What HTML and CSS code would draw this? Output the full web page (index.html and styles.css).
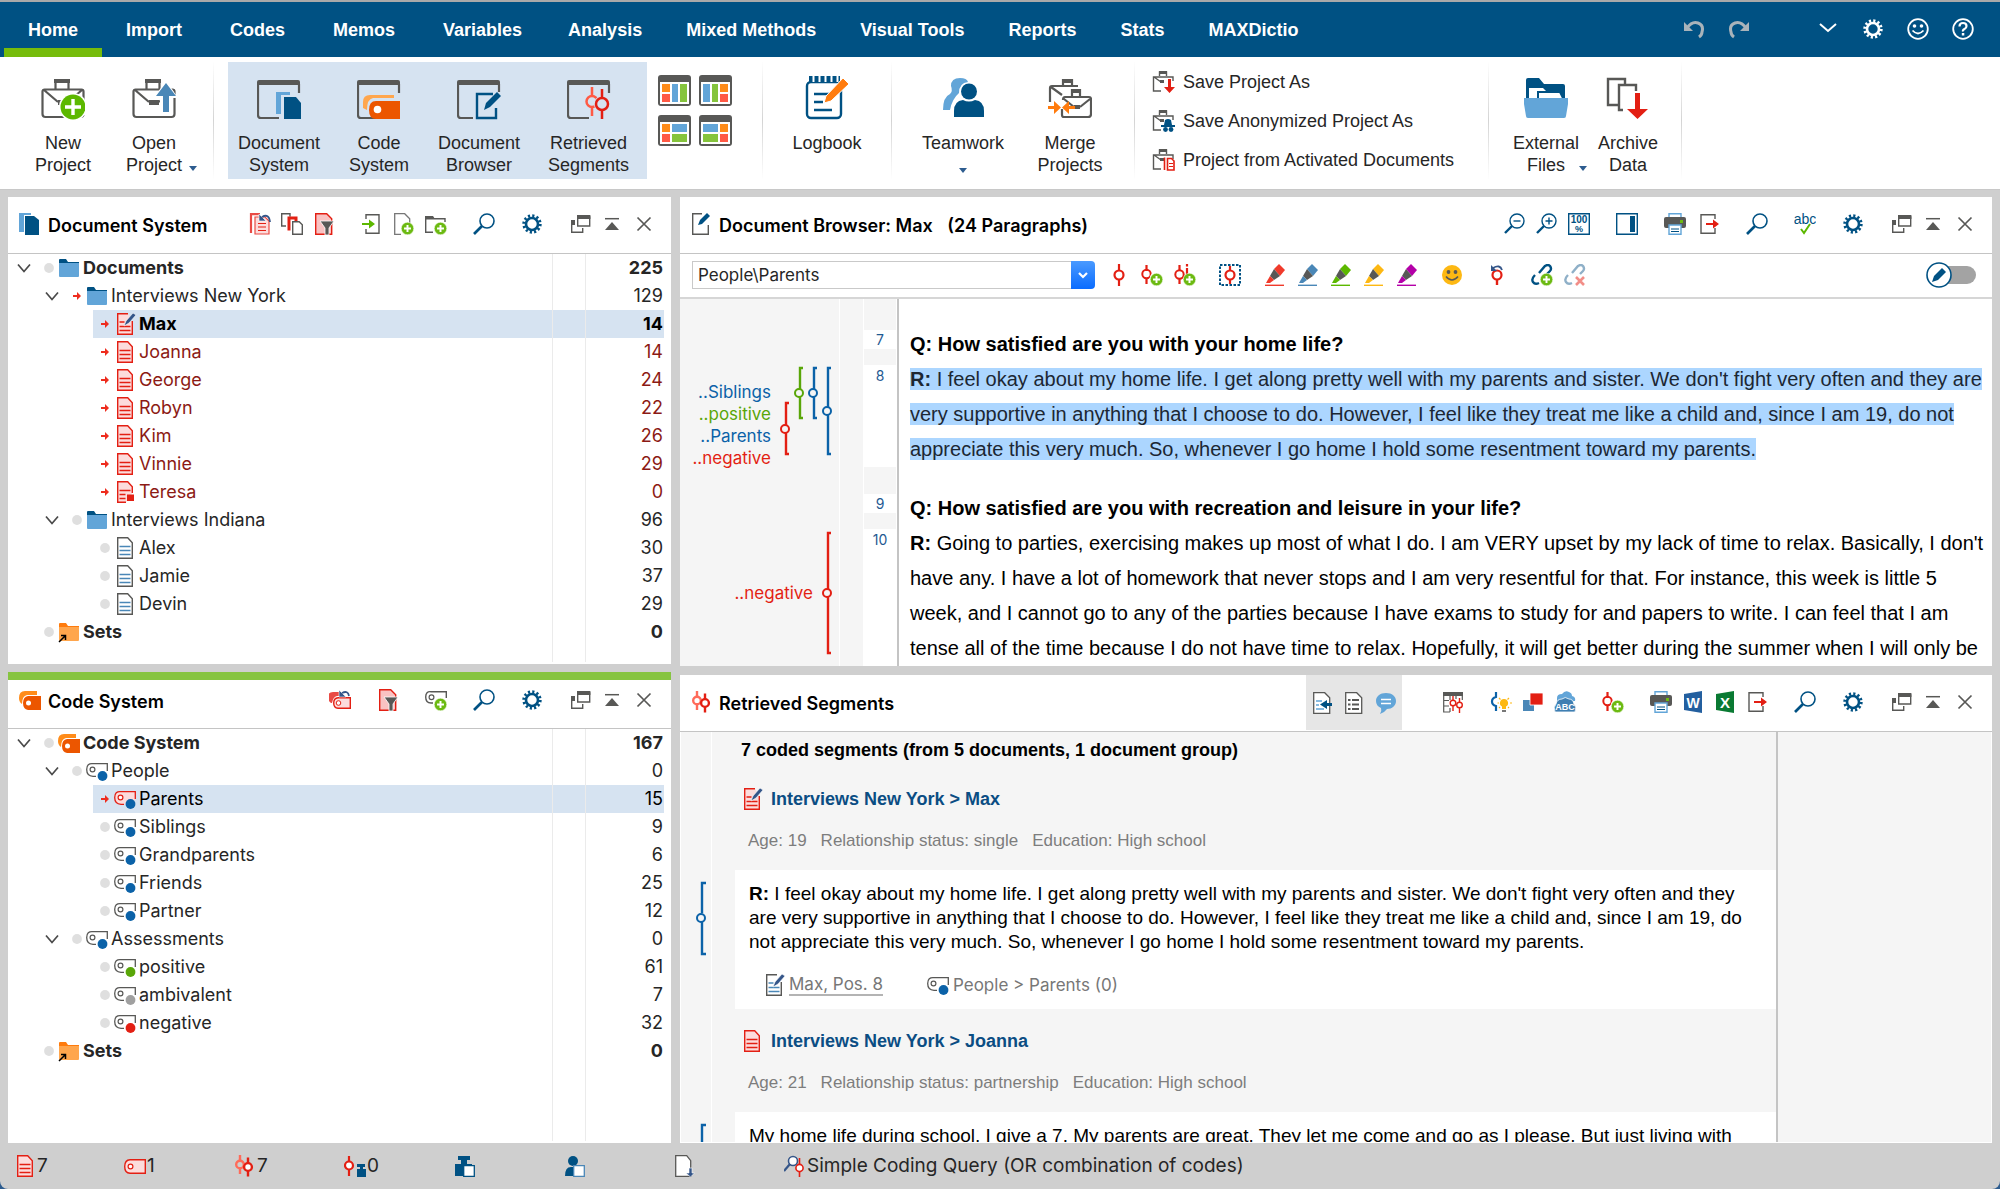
FILE: index.html
```html
<!DOCTYPE html>
<html lang="en">
<head>
<meta charset="utf-8">
<title>Project workspace</title>
<link rel="stylesheet" href="styles.css">
</head>
<body>
<svg class="sprite" aria-hidden="true">
  <!-- shared parts -->
  <symbol id="plus" viewBox="0 0 12 12"><circle cx="6" cy="6" r="5.800" fill="#6cba12" stroke="#fff" stroke-width=".5"/><path d="M6 2.800v6.400M2.800 6h6.400" stroke="#fff" stroke-width="1.800"/></symbol>
  <symbol id="case" viewBox="0 0 44 44"><path d="M13 3h16v4H13z" fill="#585856"/><path d="M14.500 13V4h13v9M3.500 13.500h37a2 2 0 0 1 2 2V38a3 3 0 0 1-3 3h-35a3 3 0 0 1-3-3V15.500a2 2 0 0 1 2-2zM3 14l14 12M41 14 27 26" fill="none" stroke="#585856" stroke-width="2.200"/><path d="M17 24h10v5H17z" fill="#585856"/></symbol>
  <symbol id="window" viewBox="0 0 44 44"><path d="M0 6a2 2 0 0 1 2-2h39a2 2 0 0 1 2 2v3H0z" fill="#585856"/><path d="M1 8v31q0 3 3 3h18M42 8v9" fill="none" stroke="#585856" stroke-width="2.200"/></symbol>

  <!-- ribbon -->
  <symbol id="r-new" viewBox="0 0 44 44"><use href="#case" width="44" height="44"/><circle cx="32" cy="31" r="14" fill="#fff"/><circle cx="32" cy="31" r="12.500" fill="#5cb800"/><path d="M32 23v16M24 31h16" stroke="#fff" stroke-width="3.400"/></symbol>
  <symbol id="r-open" viewBox="0 0 44 44"><use href="#case" width="44" height="44"/><path d="M34 4 46 22h-6v16H28V22h-6z" fill="#fff"/><path d="M34 7 44 20h-7v16h-6V20h-7z" fill="#4a87b7"/></symbol>
  <symbol id="r-docs" viewBox="0 0 44 44"><use href="#window" width="44" height="44"/><path d="M19 16h14v22H19z" fill="#62a5d8"/><path d="M24 19h21v26H24z" fill="#d6e3f1"/><path d="M27 21h12l5 6v16H27z" fill="#005183"/></symbol>
  <symbol id="r-codes" viewBox="0 0 44 44"><use href="#window" width="44" height="44"/><path d="M6 32V26q0-7 7-7h24v3H16q-6 1-6 12z" fill="#ffa64d"/><path d="M19 25h24v18H19q-7 0-7-9t7-9z" fill="#ec5600"/><circle cx="20.500" cy="33.500" r="3.800" fill="#fff"/></symbol>
  <symbol id="r-browser" viewBox="0 0 44 44"><use href="#window" width="44" height="44"/><path d="M16 16h29v28H16z" fill="#d6e3f1"/><path d="M36 18H20v24h19V32" fill="none" stroke="#005183" stroke-width="2.400"/><path d="m27 34 2-7L40 16l4 4-11 11z" fill="#005183"/></symbol>
  <symbol id="r-segments" viewBox="0 0 44 44"><use href="#window" width="44" height="44"/><g fill="none" stroke="#ff5a45" stroke-width="2.500"><path d="M25 11v9M25 31v9"/><circle cx="25" cy="25.500" r="5.500"/></g><circle cx="35" cy="28" r="8" fill="#d6e3f1"/><g fill="none" stroke="#e31f13" stroke-width="2.500"><path d="M35 13v9M35 34v9"/><circle cx="35" cy="28" r="6"/></g></symbol>
  <symbol id="lay1" viewBox="0 0 33 31"><rect width="33" height="31" rx="3" fill="#585856"/><path d="M2 7h29v22H2z" fill="#fff"/><path d="M4 9h8v8H4z" fill="#ff8c1a"/><path d="M4 19h8v8H4z" fill="#ff5a45"/><path d="M14 9h6v18h-6z" fill="#62a5d8"/><path d="M22 9h7v18h-7z" fill="#85c43c"/></symbol>
  <symbol id="lay2" viewBox="0 0 33 31"><rect width="33" height="31" rx="3" fill="#585856"/><path d="M2 7h29v22H2z" fill="#fff"/><path d="M21 9h8v8h-8z" fill="#ff8c1a"/><path d="M21 19h8v8h-8z" fill="#ff5a45"/><path d="M4 9h7v18H4z" fill="#62a5d8"/><path d="M13 9h6v18h-6z" fill="#85c43c"/></symbol>
  <symbol id="lay3" viewBox="0 0 33 31"><rect width="33" height="31" rx="3" fill="#585856"/><path d="M2 7h29v22H2z" fill="#fff"/><path d="M4 9h8v8H4z" fill="#ff8c1a"/><path d="M4 19h8v8H4z" fill="#ff5a45"/><path d="M14 9h15v8H14z" fill="#62a5d8"/><path d="M14 19h15v8H14z" fill="#85c43c"/></symbol>
  <symbol id="lay4" viewBox="0 0 33 31"><rect width="33" height="31" rx="3" fill="#585856"/><path d="M2 7h29v22H2z" fill="#fff"/><path d="M21 9h8v8h-8z" fill="#ff8c1a"/><path d="M21 19h8v8h-8z" fill="#ff5a45"/><path d="M4 9h15v8H4z" fill="#62a5d8"/><path d="M4 19h15v8H4z" fill="#85c43c"/></symbol>
  <symbol id="r-log" viewBox="0 0 44 44"><rect x="2" y="6" width="34" height="36" rx="4" fill="#fff" stroke="#005183" stroke-width="2.400"/><path d="M4-1h31v8H4z" fill="#005183"/><path d="M8.500-2v8M14.500-2v8M20.500-2v8M26.500-2v8M32.500-2v8" stroke="#fff" stroke-width="2"/><path d="M9 18h16M9 26h9M9 34h18" stroke="#005183" stroke-width="2.400"/><path d="m19 27 2-7L38 2l6 6-18 17z" fill="#ff7b0d" stroke="#fff" stroke-width="1"/></symbol>
  <symbol id="r-team" viewBox="0 0 44 44"><path d="M10 10q0-8 9-8 7 0 8 4-9 1-9 11-7 6-9 17H2q0-13 7-16 3-3 1-8z" fill="#62a5d8"/><circle cx="28" cy="15.500" r="8" fill="#005183"/><path d="M13 41V35q0-10 9-11 6 3 12 0 9 1 9 11v6z" fill="#005183"/></symbol>
  <symbol id="r-merge" viewBox="0 0 44 44"><g fill="none" stroke="#585856" stroke-width="2.200"><path d="M15 10V4h9v6M2 26V12q0-2 2-2h26M3 11l11 8M24 21v-7h8v7M14 33v6q0 2 2 2h24q3 0 3-3V23q0-2-2-2H17q-2 0-2 3M16 23l10 8M42 23 32 31"/></g><path d="M14 3h11v4H14zM23 13h10v4H23zM26 29h6v4h-6z" fill="#585856"/><path d="M-1 30h7v-5l7 6.500L6 38v-5h-7zM27 30h-6v-5l-7 6.500 7 6.500v-5h6z" fill="#ff7b0d"/></symbol>
  <symbol id="r-ext" viewBox="0 0 44 44"><path d="M2 30V4q0-2 2-2h11l5 6h19q2 0 2 2v20z" fill="#005183"/><path d="M5 12h14l5 5v6H5z" fill="#fff"/><path d="M14 16h22l4 8H14z" fill="#fff" stroke="#005183" stroke-width="2"/><path d="M-1 22h46l-3 18q0 2-2 2H4q-2 0-2-2z" fill="#62a5d8"/></symbol>
  <symbol id="r-arch" viewBox="0 0 44 44"><path d="M13 29H2V3h17v6M17 34h-4V9h17v6" fill="none" stroke="#585856" stroke-width="2.400"/><path d="M29 17h5v16h8L31.500 43 21 33h8z" fill="#e31f13"/></symbol>
  <symbol id="s-case" viewBox="0 0 23 23"><path d="M7 1h8v3H7z" fill="#585856"/><path d="M7.500 6V2h7v4M21 11V7H1.500v14H9M2 7l7 5" fill="none" stroke="#585856" stroke-width="1.400"/><path d="M8 10h4v3H8z" fill="#585856"/></symbol>
  <symbol id="s-save" viewBox="0 0 23 23"><use href="#s-case" width="23" height="23"/><path d="M16 9h3v8h4l-5.500 6L12 17h4z" fill="#e31f13"/></symbol>
  <symbol id="s-anon" viewBox="0 0 23 23"><use href="#s-case" width="23" height="23"/><path d="M13 11q3-2 6 0l1 5h3v2H9v-2h3z" fill="#005183"/><circle cx="13.500" cy="20.500" r="2.400" fill="#005183"/><circle cx="19" cy="20.500" r="2.400" fill="#005183"/></symbol>
  <symbol id="s-act" viewBox="0 0 23 23"><use href="#s-case" width="23" height="23"/><path d="M12.500 22V9.500M15.500 10.500h4l2.500 2.500v9h-6.500z" fill="#fff" stroke="#e31f13" stroke-width="1.600"/><path d="M17 15.500h4M17 18.500h4" stroke="#e31f13" stroke-width="1.200"/></symbol>

  <!-- title bar -->
  <symbol id="undo" viewBox="0 0 22 22"><path d="M1 4v9h9z" fill="#a9b3ba"/><path d="M4 10Q9 3 15 5t4 9q0 3-3 5" fill="none" stroke="#a9b3ba" stroke-width="3"/></symbol>
  <symbol id="redo" viewBox="0 0 22 22"><path d="M21 4v9h-9z" fill="#a9b3ba"/><path d="M18 10Q13 3 7 5t-4 9q0 3 3 5" fill="none" stroke="#a9b3ba" stroke-width="3"/></symbol>
  <symbol id="down" viewBox="0 0 22 22"><path d="m3 6 8 7 8-7" fill="none" stroke="currentColor" stroke-width="2"/></symbol>
  <symbol id="smile" viewBox="0 0 22 22"><circle cx="11" cy="11" r="9.800" fill="none" stroke="#fff" stroke-width="1.800"/><circle cx="7.500" cy="8" r="1.800" fill="#fff"/><circle cx="14.500" cy="8" r="1.800" fill="#fff"/><path d="M5.500 12.500q5.500 6 11 0" fill="none" stroke="#fff" stroke-width="1.800"/></symbol>
  <symbol id="help" viewBox="0 0 22 22"><circle cx="11" cy="11" r="9.800" fill="none" stroke="#fff" stroke-width="1.800"/><path d="M7.500 8.500q0-3.500 3.500-3.500t3.500 3q0 2-2 3T11 13.500" fill="none" stroke="#fff" stroke-width="2.200"/><path d="M9.800 15h2.500v2.500H9.800z" fill="#fff"/></symbol>

  <!-- panel toolbars -->
  <symbol id="gear" viewBox="0 0 22 22"><circle cx="11" cy="11" r="8.200" fill="none" stroke="currentColor" stroke-width="3" stroke-dasharray="2.147"/><circle cx="11" cy="11" r="6" fill="none" stroke="currentColor" stroke-width="2.600"/></symbol>
  <symbol id="search" viewBox="0 0 22 22"><circle cx="14" cy="8" r="7" fill="none" stroke="#005183" stroke-width="1.600"/><path d="m9 13-8 8" stroke="#005183" stroke-width="2.600"/></symbol>
  <symbol id="zoomout" viewBox="0 0 22 22"><circle cx="13" cy="8" r="7" fill="none" stroke="#005183" stroke-width="1.400"/><path d="m8 13-7 7" stroke="#005183" stroke-width="2.400"/><path d="M9.500 8h7" stroke="#005183" stroke-width="1.400"/></symbol>
  <symbol id="zoomin" viewBox="0 0 22 22"><circle cx="13" cy="8" r="7" fill="none" stroke="#005183" stroke-width="1.400"/><path d="m8 13-7 7" stroke="#005183" stroke-width="2.400"/><path d="M9.500 8h7M13 4.500v7" stroke="#005183" stroke-width="1.400"/></symbol>
  <symbol id="hundred" viewBox="0 0 22 22"><path d="M.7.700h20.600v20.600H.7z" fill="none" stroke="#005183" stroke-width="1.400"/><text x="11" y="10" font-size="10" font-weight="bold" text-anchor="middle" fill="#005183">100</text><text x="11" y="19" font-size="9" font-weight="bold" text-anchor="middle" fill="#005183">%</text></symbol>
  <symbol id="sidebar" viewBox="0 0 22 22"><path d="M.7.700h20.600v20.600H.7z" fill="none" stroke="#005183" stroke-width="1.400"/><path d="M14 3h5v16h-5z" fill="#005183"/></symbol>
  <symbol id="printer" viewBox="0 0 22 22"><path d="M5 6V.7h12V6" fill="none" stroke="#62a5d8" stroke-width="1.400"/><rect y="4" width="22" height="11" rx="2" fill="#585856"/><path d="M16 7h3v3h-3z" fill="#6cba12"/><path d="M5 12h12v9.300H5z" fill="#fff" stroke="#62a5d8" stroke-width="1.400"/><path d="M7 16h8M7 18.500h8" stroke="#005183" stroke-width="1.200"/></symbol>
  <symbol id="export" viewBox="0 0 22 22"><path d="M17 6V1.700H3v18.600h14V15" fill="none" stroke="#585856" stroke-width="1.400"/><path d="M8 10h7V6.500l6 4.500-6 4.500V12H8z" fill="#e31f13"/></symbol>
  <symbol id="restore" viewBox="0 0 22 22"><path d="M8.700 4h12v9h-12z" fill="none" stroke="#585856" stroke-width="1.400"/><path d="M8 2h13.400v4H8zM2 7h4v5H2z" fill="#585856"/><path d="M2.700 9v10.300h11V15" fill="none" stroke="#585856" stroke-width="1.400"/></symbol>
  <symbol id="collapse" viewBox="0 0 22 22"><path d="M4 5.700h14" stroke="#585856" stroke-width="1.500"/><path d="m11 9 7 8H4z" fill="#585856"/></symbol>
  <symbol id="close" viewBox="0 0 22 22"><path d="m4.500 4.500 13 13M17.500 4.500l-13 13" stroke="#585856" stroke-width="1.700"/></symbol>
  <symbol id="abc" viewBox="0 0 22 22"><text x="11" y="11" font-size="14" text-anchor="middle" fill="#005183">abc</text><path d="m7 16 3 4 6-9" fill="none" stroke="#5cb800" stroke-width="2"/></symbol>
  <symbol id="reset-docs" viewBox="0 0 22 22"><path d="M2 20V1.200h9" fill="none" stroke="#e94b45" stroke-width="2.200"/><path d="M6 4h10l4 4v13H6z" fill="#fcdcdc" stroke="#e94b45" stroke-width="1.200"/><path d="M9 10.500h8M9 14h8M9 17.500h8" stroke="#e31f13" stroke-width="1.200"/><path d="M10 1v7h7z" fill="#355689" stroke="#fff" stroke-width=".6"/><path d="M13 4q7-4 8 5" fill="none" stroke="#355689" stroke-width="1.800"/></symbol>
  <symbol id="copy-docs" viewBox="0 0 22 22"><path d="M5 13H.7V.7H9v3" fill="none" stroke="#585856" stroke-width="1.400"/><path d="M8 17.500V5h7v3" fill="none" stroke="#e31f13" stroke-width="3"/><path d="M11.700 8.700h6.500l3.100 3v9.600h-9.600z" fill="#fff" stroke="#585856" stroke-width="1.400"/></symbol>
  <symbol id="filter-doc" viewBox="0 0 22 22"><path d="M2.700.7h11l5 5v15.600h-16z" fill="#f9c2c2" stroke="#e31f13" stroke-width="1.400"/><path d="M7 8h14l-5 7v7h-4v-7z" fill="#585856" stroke="#fff" stroke-width=".8"/></symbol>
  <symbol id="import" viewBox="0 0 22 22"><path d="M5 6V1.700h13v18.600H5V16" fill="none" stroke="#585856" stroke-width="1.400"/><path d="M1 10h7V6.500l6 4.500-6 4.500V12H1z" fill="#5cb800"/></symbol>
  <symbol id="doc-plus" viewBox="0 0 22 22"><path d="M8 21.300H1.700V.7h10l5 5V10" fill="none" stroke="#777" stroke-width="1.300"/><use href="#plus" x="8" y="9" width="13" height="13"/></symbol>
  <symbol id="folder-plus" viewBox="0 0 22 22"><path d="M8 19.300H.7V5.700H20V9" fill="none" stroke="#585856" stroke-width="1.400"/><path d="M0 3h8l2 3H0z" fill="#585856"/><use href="#plus" x="9" y="9" width="13" height="13"/></symbol>
  <symbol id="reset-codes" viewBox="0 0 22 22"><path d="M2 14Q-1 12-1 8q0-5 5-5h7v4H8q-4 1-5 7z" fill="#e94b45"/><path d="M9 8.700h12.300v10.600H9Q4.700 19 4.700 14T9 8.700z" fill="#fcdcdc" stroke="#e31f13" stroke-width="1.400"/><circle cx="9.500" cy="14" r="2.300" fill="#fff" stroke="#e31f13"/><path d="M10 1v7h7z" fill="#355689" stroke="#fff" stroke-width=".6"/><path d="M13 4q6-3 7 3" fill="none" stroke="#355689" stroke-width="1.800"/></symbol>
  <symbol id="code-plus" viewBox="0 0 22 22"><path d="M8 14H6Q.7 14 .7 8T6 2.700h15.300V9" fill="none" stroke="#585856" stroke-width="1.400"/><circle cx="6.500" cy="8.300" r="2.400" fill="none" stroke="#585856" stroke-width="1.200"/><use href="#plus" x="9" y="9" width="13" height="13"/></symbol>

  <!-- coding toolbar -->
  <symbol id="seg" viewBox="0 0 22 22"><path d="M11 0v6M11 15v7" stroke="currentColor" stroke-width="2.200"/><circle cx="11" cy="11" r="4.500" fill="none" stroke="currentColor" stroke-width="2.200"/></symbol>
  <symbol id="seg-plus" viewBox="0 0 22 22"><path d="M5.500 1v6M5.500 14v6" stroke="#e31f13" stroke-width="2.200"/><circle cx="5.500" cy="10" r="4.200" fill="none" stroke="#e31f13" stroke-width="2"/><circle cx="16" cy="15" r="7.500" fill="#fff"/><use href="#plus" x="9" y="9" width="13" height="13"/></symbol>
  <symbol id="seg-info" viewBox="0 0 22 22"><path d="M5.500 1v6M5.500 14v6M13 4v7M13 0v2.500" stroke="#e31f13" stroke-width="2.200"/><circle cx="5.500" cy="10.500" r="4.200" fill="none" stroke="#e31f13" stroke-width="2"/><use href="#plus" x="9" y="9" width="13" height="13"/></symbol>
  <symbol id="seg-box" viewBox="0 0 22 22"><path d="M1 1h20v20H1z" fill="none" stroke="#005183" stroke-width="2" stroke-dasharray="2.500 1.500"/><path d="M11 2v5M11 15v5" stroke="#e31f13" stroke-width="2.200"/><circle cx="11" cy="11" r="4.500" fill="none" stroke="#e31f13" stroke-width="2.200"/></symbol>
  <symbol id="marker" viewBox="0 0 22 22"><path d="M1 21.300h19" stroke="currentColor" stroke-width="1.400"/><path d="m15 0 6 6-5 6-6-7z" fill="currentColor"/><path d="m10 5 6 7-6 4-4-4z" fill="#585856"/><path d="m6 12 4 4-4 3H2z" fill="currentColor"/></symbol>
  <symbol id="emoji" viewBox="0 0 22 22"><circle cx="11" cy="11" r="10" fill="#fdb813"/><circle cx="7.500" cy="8" r="1.900" fill="#585856"/><circle cx="14.500" cy="8" r="1.900" fill="#585856"/><path d="M5 12.500q6 7 12 0" fill="none" stroke="#585856" stroke-width="1.600"/></symbol>
  <symbol id="seg-undo" viewBox="0 0 22 22"><circle cx="11" cy="11" r="4.500" fill="none" stroke="#e31f13" stroke-width="2.200"/><path d="M11 15v6" stroke="#e31f13" stroke-width="2.400"/><path d="M5 1v6h6z" fill="#355689"/><path d="M7 4q7-4 9 2" fill="none" stroke="#355689" stroke-width="1.800"/></symbol>
  <symbol id="link-plus" viewBox="0 0 22 22"><g fill="none" stroke="currentColor" stroke-width="2.400"><path d="m8 9 6-7q3-2 5 0 2 3 0 5l-3 3"/><path d="M4 11q-4 4-2 7 2 3 6 1"/></g><use href="#plus" x="9" y="9" width="13" height="13"/></symbol>
  <symbol id="link-x" viewBox="0 0 22 22"><g fill="none" stroke="#8fb0c8" stroke-width="2.400"><path d="m8 9 6-7q3-2 5 0 2 3 0 5l-3 3"/><path d="M4 11q-4 4-2 7 2 3 6 1"/></g><path d="m12 13 8 8M20 13l-8 8" stroke="#f28e88" stroke-width="2.600"/></symbol>
  <symbol id="toggle" viewBox="0 0 50 26"><rect x="14" y="4" width="36" height="18" rx="9" fill="#a3a3a3"/><circle cx="13" cy="13" r="12" fill="#fff" stroke="#005183" stroke-width="1.600"/><path d="m6 20 2-6 8-8 4 4-8 8z" fill="#005183"/></symbol>

  <!-- retrieved toolbar -->
  <symbol id="doc-in" viewBox="0 0 22 22"><path d="M2.700.7h11l5 5v15.600h-16z" fill="#fff" stroke="#585856" stroke-width="1.300"/><path d="M5 9h6M5 13h3M5 17h8" stroke="#62a5d8" stroke-width="1.300"/><path d="M21 11h-5V8l-7 4.500 7 4.500v-3h5z" fill="#005183"/></symbol>
  <symbol id="doc-list" viewBox="0 0 22 22"><path d="M2.700.7h11l5 5v15.600h-16z" fill="#fff" stroke="#585856" stroke-width="1.300"/><path d="M5 8h2.500M5 12.500h2.500M5 17h2.500M9 8h7M9 12.500h7M9 17h7" stroke="#585856" stroke-width="1.900"/></symbol>
  <symbol id="comment" viewBox="0 0 22 22"><path d="M11 1c6 0 10 3.500 10 8s-4 8-9 8q-3 4-7 5 2-3 1-6-5-2-5-7c0-4.500 4-8 10-8z" fill="#62a5d8"/><path d="M6 7.500h10M6 11.500h10" stroke="#fff" stroke-width="1.500"/></symbol>
  <symbol id="table-seg" viewBox="0 0 22 22"><path d="M1 1h20v4H1z" fill="#585856"/><path d="M1.700 4v17H8M8 5v4M2 9.500h5M2 15h5M20.300 5v4M14 5v3M8 17v4" fill="none" stroke="#585856" stroke-width="1.200"/><g fill="none" stroke="#e31f13" stroke-width="1.400"><circle cx="11" cy="12" r="2.800"/><circle cx="17.500" cy="14" r="2.800"/><path d="M11 5v4M11 15v5M17.500 7v4M17.500 17v5"/></g></symbol>
  <symbol id="seg-bulb" viewBox="0 0 22 22"><path d="M6 1v5Q2 7 2 10.500T6 15v5" fill="none" stroke="#0b62a8" stroke-width="2.200"/><path d="M14 8a4 4 0 0 1 2 7.500V18h-4v-2.500A4 4 0 0 1 14 8z" fill="#fdb813"/><path d="M12 19h4v2h-4z" fill="#777"/><path d="m9 7 1.500 1.500M19 7l-1.500 1.500M7.500 12H9M20 12h2M9 17l1-1M19 17l-1-1" stroke="#fdb813" stroke-width="1.200"/></symbol>
  <symbol id="squares" viewBox="0 0 22 22"><path d="M1 9h11v11H1z" fill="#4a87b7"/><path d="M8 2h13v12H8z" fill="#e31f13" stroke="#fff" stroke-width=".8"/></symbol>
  <symbol id="wordcloud" viewBox="0 0 22 22"><path d="M3 7q0-4 5-4 3-4 7-2 3 1 3 4 4 1 3 5H3z" fill="#62a5d8"/><path d="M1 21q-2-5 1-8 1-5 6-5 3-3 7 0 4 0 5 5 3 3 1 8z" fill="#3f7fb2" stroke="#fff" stroke-width=".8"/><text x="11" y="19" font-size="9" font-weight="bold" text-anchor="middle" fill="#fff">ABC</text></symbol>
  <symbol id="word" viewBox="0 0 22 22"><path d="M2 3 20 0v22L2 19z" fill="#235f9f"/><text x="11" y="16.500" font-size="14" font-weight="bold" text-anchor="middle" fill="#fff">W</text></symbol>
  <symbol id="excel" viewBox="0 0 22 22"><path d="M2 3 20 0v22L2 19z" fill="#0a7a33"/><text x="11" y="16.500" font-size="15" font-weight="bold" text-anchor="middle" fill="#fff">X</text></symbol>

  <!-- panel titles and tree items -->
  <symbol id="t-docs" viewBox="0 0 22 22"><path d="M0 0h12v2H5v17H0z" fill="#62a5d8"/><path d="M6 3h9l5 4v15H6z" fill="#005183"/></symbol>
  <symbol id="t-codes" viewBox="0 0 22 22"><path d="M3 15Q0 13 0 9q0-7 6-7h12v4H8q-5 1-5 9z" fill="#ff8c1a"/><path d="M9 7h13v14H9q-5-1-5-7t5-7z" fill="#ec5600"/><circle cx="9.500" cy="14" r="2.500" fill="#fff"/></symbol>
  <symbol id="t-browser" viewBox="0 0 22 22"><path d="M11 .7H1.700v20.600h15.600V12" fill="none" stroke="#585856" stroke-width="1.400"/><path d="m7 12 2-5 7-7 3 3-8 8z" fill="#005183"/></symbol>
  <symbol id="t-segs" viewBox="0 0 22 22"><g fill="none" stroke="#ff6b5a" stroke-width="2.400"><path d="M6 0v6M6 13v6"/><circle cx="6" cy="9.500" r="3.800"/></g><g fill="#fff" stroke="#e31f13" stroke-width="2.400"><path d="M14 2.500v6M14 15.500v6"/><circle cx="14" cy="12" r="3.900"/></g></symbol>
  <symbol id="folder" viewBox="0 0 22 22"><path d="M1 8V3q0-1 1-1h6l2 3h11v3z" fill="var(--tab)"/><path d="M1 6h20v13q0 1-1 1H2q-1 0-1-1z" fill="var(--face)"/></symbol>
  <symbol id="set" viewBox="0 0 22 22"><path d="M1 8V3q0-1 1-1h6l2 3h11v3z" fill="#ff7b0d"/><path d="M1 6h20v13q0 1-1 1H2q-1 0-1-1z" fill="#ffa64d"/><path d="m1 21 6-6M3 14.500h4.500V19" fill="none" stroke="#000" stroke-width="1.500"/></symbol>
  <symbol id="file" viewBox="0 0 22 22"><path d="M3.700.7h10l4.600 5v15.600H3.700z" fill="var(--page)" stroke="var(--edge)" stroke-width="1.400"/><path d="M5.500 9.500h11M5.500 13.500h11M5.500 17.500h11" stroke="var(--rule)" stroke-width="1.400"/></symbol>
  <symbol id="file-pen" viewBox="0 0 22 22"><path d="M14 .7H3.700v20.600h14.600V8" fill="var(--page)" stroke="var(--edge)" stroke-width="1.400"/><path d="M5.500 9h5M5.500 13.500h11M5.500 17.500h11" stroke="var(--rule)" stroke-width="1.400"/><path d="m10 13 2-5 7-8 3 2-7 8z" fill="#355689" stroke="#fff" stroke-width=".6"/></symbol>
  <symbol id="file-sq" viewBox="0 0 22 22"><path d="M12 21.300H3.700V.7h10l4.600 5V12" fill="var(--page)" stroke="var(--edge)" stroke-width="1.400"/><path d="M5.500 9.500h11M5.500 13.500h6M5.500 17.500h6" stroke="var(--rule)" stroke-width="1.400"/><path d="M13 13.500h7V20h-7z" fill="#e31f13"/></symbol>
  <symbol id="code" viewBox="0 0 22 22"><path d="M10 16.300H7Q.7 16 .7 9.500T7 3.700h14.300V12z" fill="var(--page)"/><path d="M10 16.300H7Q.7 16 .7 9.500T7 3.700h14.300V11" fill="none" stroke="var(--edge)" stroke-width="1.300"/><circle cx="6.500" cy="9.500" r="2.400" fill="#fff" stroke="var(--edge)" stroke-width="1.200"/><circle cx="16.500" cy="16" r="4.900" fill="currentColor"/></symbol>
  <symbol id="tag" viewBox="0 0 22 22"><path d="M6 4.700h15.300v13.600H6Q.7 18 .7 11.500T6 4.700z" fill="#fcdcdc" stroke="#e31f13" stroke-width="1.400"/><circle cx="6.500" cy="11.500" r="2.400" fill="#fff" stroke="#e31f13" stroke-width="1.200"/></symbol>
  <symbol id="go" viewBox="0 0 10 10"><path d="M1 4h4V1l4 4-4 4V6H1z" fill="#ee2c1e"/></symbol>
  <symbol id="dot" viewBox="0 0 10 10"><circle cx="5" cy="5" r="4.900" fill="#dfdfdf"/></symbol>
  <symbol id="chev" viewBox="0 0 14 14"><path d="m1 3.500 6 7 6-7" fill="none" stroke="#4a4a4a" stroke-width="1.700"/></symbol>

  <!-- status bar -->
  <symbol id="st-weight" viewBox="0 0 22 22"><path d="M5 1v20" stroke="#e31f13" stroke-width="2.200"/><circle cx="5" cy="10.500" r="4" fill="#fff" stroke="#e31f13" stroke-width="2.200"/><path d="M13 9h8v3h-2v2h3v8h-9v-8h3v-2h-3z" fill="#005183"/></symbol>
  <symbol id="st-bottle" viewBox="0 0 22 22"><path d="M4 1h12v4h-3v4h5v12H1V9h6V5H4z" fill="#005183"/><path d="M9.700 10.700h10.600v10.600H9.700z" fill="#fff" stroke="#005183" stroke-width="1.300"/></symbol>
  <symbol id="st-user" viewBox="0 0 22 22"><circle cx="9" cy="6" r="5" fill="#005183"/><path d="M1 21q0-9 6-9h8v9z" fill="#005183"/><path d="M9.700 10.700h10.600v10.600H9.700z" fill="#fff" stroke="#4a87b7" stroke-width="1.300"/></symbol>
  <symbol id="st-doc" viewBox="0 0 22 22"><path d="M1.700.7h11l4 5v15.600h-15z" fill="#fff" stroke="#585856" stroke-width="1.300"/><path d="M15 13h3v5h2.500L16.500 22 12 18h3z" fill="#355689" stroke="#fff" stroke-width=".6"/></symbol>
  <symbol id="st-query" viewBox="0 0 22 22"><circle cx="9" cy="6" r="4.500" fill="#fff" stroke="#355689" stroke-width="1.600"/><path d="m6 9-6 7" stroke="#355689" stroke-width="2.200"/><path d="M15.500 3v19" stroke="#e31f13" stroke-width="1.600"/><circle cx="15.500" cy="13" r="3.600" fill="#fff" stroke="#e31f13" stroke-width="1.600"/></symbol>
</svg>

<header class="topbar">
  <nav class="tabs" aria-label="Main">
    <a href="#" class="tab active" aria-current="page">Home</a><a href="#" class="tab">Import</a><a href="#" class="tab">Codes</a><a href="#" class="tab">Memos</a><a href="#" class="tab">Variables</a><a href="#" class="tab">Analysis</a><a href="#" class="tab">Mixed Methods</a><a href="#" class="tab">Visual Tools</a><a href="#" class="tab">Reports</a><a href="#" class="tab">Stats</a><a href="#" class="tab">MAXDictio</a>
  </nav>
  <div class="quick">
    <div class="set wide"><button aria-label="Undo"><svg class="ic"><use href="#undo"/></svg></button><button aria-label="Redo"><svg class="ic"><use href="#redo"/></svg></button></div>
    <div class="set wide"><button aria-label="Hide ribbon"><svg class="ic"><use href="#down"/></svg></button><button aria-label="Settings"><svg class="ic"><use href="#gear"/></svg></button><button aria-label="Feedback"><svg class="ic"><use href="#smile"/></svg></button><button aria-label="Help"><svg class="ic"><use href="#help"/></svg></button></div>
  </div>
</header>

<section class="ribbon" aria-label="Home tools">
  <div class="group first">
    <button class="tool w92"><svg class="big"><use href="#r-new"/></svg><span>New<br>Project</span></button>
    <button class="tool w90"><svg class="big"><use href="#r-open"/></svg><span>Open<br>Project</span><i class="caret side"></i></button>
  </div>
  <div class="group on">
    <button class="tool w102"><svg class="big"><use href="#r-docs"/></svg><span>Document<br>System</span></button>
    <button class="tool w98"><svg class="big"><use href="#r-codes"/></svg><span>Code<br>System</span></button>
    <button class="tool w102"><svg class="big"><use href="#r-browser"/></svg><span>Document<br>Browser</span></button>
    <button class="tool w117"><svg class="big"><use href="#r-segments"/></svg><span>Retrieved<br>Segments</span></button>
  </div>
  <div class="layouts">
    <button aria-label="Layout 1"><svg class="lay"><use href="#lay1"/></svg></button>
    <button aria-label="Layout 2"><svg class="lay"><use href="#lay2"/></svg></button>
    <button aria-label="Layout 3"><svg class="lay"><use href="#lay3"/></svg></button>
    <button aria-label="Layout 4"><svg class="lay"><use href="#lay4"/></svg></button>
  </div>
  <div class="group split">
    <button class="tool w100"><svg class="big"><use href="#r-log"/></svg><span>Logbook</span></button>
  </div>
  <div class="group split">
    <button class="tool w114"><svg class="big"><use href="#r-team"/></svg><span>Teamwork</span><i class="caret under"></i></button>
    <button class="tool w100"><svg class="big"><use href="#r-merge"/></svg><span>Merge<br>Projects</span></button>
  </div>
  <div class="group split list">
    <button class="line"><svg class="sm"><use href="#s-save"/></svg>Save Project As</button>
    <button class="line"><svg class="sm"><use href="#s-anon"/></svg>Save Anonymized Project As</button>
    <button class="line"><svg class="sm"><use href="#s-act"/></svg>Project from Activated Documents</button>
  </div>
  <div class="group split last">
    <button class="tool w86"><svg class="big"><use href="#r-ext"/></svg><span>External<br>Files</span><i class="caret side"></i></button>
    <button class="tool w78"><svg class="big"><use href="#r-arch"/></svg><span>Archive<br>Data</span></button>
  </div>
</section>

<main class="workspace">
  <div class="side">
    <section class="panel docs" aria-label="Document System">
      <header class="bar">
        <svg class="ic"><use href="#t-docs"/></svg><h2>Document System</h2>
        <div class="tools">
          <div class="set"><button aria-label="Reset activations"><svg class="ic"><use href="#reset-docs"/></svg></button><button aria-label="Activated documents"><svg class="ic"><use href="#copy-docs"/></svg></button><button aria-label="Filter"><svg class="ic"><use href="#filter-doc"/></svg></button></div>
          <div class="set"><button aria-label="Import"><svg class="ic"><use href="#import"/></svg></button><button aria-label="New document"><svg class="ic"><use href="#doc-plus"/></svg></button><button aria-label="New group"><svg class="ic"><use href="#folder-plus"/></svg></button></div>
          <button aria-label="Search"><svg class="ic"><use href="#search"/></svg></button>
          <button aria-label="Settings"><svg class="ic blue"><use href="#gear"/></svg></button>
          <div class="set"><button aria-label="Undock"><svg class="ic"><use href="#restore"/></svg></button><button aria-label="Minimize"><svg class="ic"><use href="#collapse"/></svg></button><button aria-label="Close"><svg class="ic"><use href="#close"/></svg></button></div>
        </div>
      </header>
      <div class="treebox">
        <table class="tree">
          <tbody>
          <tr class="l0 strong"><th scope="row"><div><svg class="chev"><use href="#chev"/></svg><svg class="mk"><use href="#dot"/></svg><svg class="ic fblue"><use href="#folder"/></svg>Documents</div></th><td></td><td>225</td></tr>
          <tr class="l1"><th scope="row"><div><svg class="chev"><use href="#chev"/></svg><svg class="mk"><use href="#go"/></svg><svg class="ic fblue"><use href="#folder"/></svg>Interviews New York</div></th><td></td><td>129</td></tr>
          <tr class="l2 strong sel"><th scope="row"><div><svg class="mk"><use href="#go"/></svg><svg class="ic red"><use href="#file-pen"/></svg>Max</div></th><td></td><td>14</td></tr>
          <tr class="l2 act"><th scope="row"><div><svg class="mk"><use href="#go"/></svg><svg class="ic red"><use href="#file"/></svg>Joanna</div></th><td></td><td>14</td></tr>
          <tr class="l2 act"><th scope="row"><div><svg class="mk"><use href="#go"/></svg><svg class="ic red"><use href="#file"/></svg>George</div></th><td></td><td>24</td></tr>
          <tr class="l2 act"><th scope="row"><div><svg class="mk"><use href="#go"/></svg><svg class="ic red"><use href="#file"/></svg>Robyn</div></th><td></td><td>22</td></tr>
          <tr class="l2 act"><th scope="row"><div><svg class="mk"><use href="#go"/></svg><svg class="ic red"><use href="#file"/></svg>Kim</div></th><td></td><td>26</td></tr>
          <tr class="l2 act"><th scope="row"><div><svg class="mk"><use href="#go"/></svg><svg class="ic red"><use href="#file"/></svg>Vinnie</div></th><td></td><td>29</td></tr>
          <tr class="l2 act"><th scope="row"><div><svg class="mk"><use href="#go"/></svg><svg class="ic red"><use href="#file-sq"/></svg>Teresa</div></th><td></td><td>0</td></tr>
          <tr class="l1"><th scope="row"><div><svg class="chev"><use href="#chev"/></svg><svg class="mk"><use href="#dot"/></svg><svg class="ic fblue"><use href="#folder"/></svg>Interviews Indiana</div></th><td></td><td>96</td></tr>
          <tr class="l2"><th scope="row"><div><svg class="mk"><use href="#dot"/></svg><svg class="ic"><use href="#file"/></svg>Alex</div></th><td></td><td>30</td></tr>
          <tr class="l2"><th scope="row"><div><svg class="mk"><use href="#dot"/></svg><svg class="ic"><use href="#file"/></svg>Jamie</div></th><td></td><td>37</td></tr>
          <tr class="l2"><th scope="row"><div><svg class="mk"><use href="#dot"/></svg><svg class="ic"><use href="#file"/></svg>Devin</div></th><td></td><td>29</td></tr>
          <tr class="l0 strong leaf"><th scope="row"><div><svg class="mk"><use href="#dot"/></svg><svg class="ic"><use href="#set"/></svg>Sets</div></th><td></td><td>0</td></tr>
          </tbody>
        </table>
      </div>
    </section>

    <section class="panel codes" aria-label="Code System">
      <header class="bar">
        <svg class="ic"><use href="#t-codes"/></svg><h2>Code System</h2>
        <div class="tools">
          <button aria-label="Reset activations"><svg class="ic"><use href="#reset-codes"/></svg></button>
          <button aria-label="Filter"><svg class="ic"><use href="#filter-doc"/></svg></button>
          <button aria-label="New code"><svg class="ic"><use href="#code-plus"/></svg></button>
          <button aria-label="Search"><svg class="ic"><use href="#search"/></svg></button>
          <button aria-label="Settings"><svg class="ic blue"><use href="#gear"/></svg></button>
          <div class="set"><button aria-label="Undock"><svg class="ic"><use href="#restore"/></svg></button><button aria-label="Minimize"><svg class="ic"><use href="#collapse"/></svg></button><button aria-label="Close"><svg class="ic"><use href="#close"/></svg></button></div>
        </div>
      </header>
      <div class="treebox">
        <table class="tree">
          <tbody>
          <tr class="l0 strong"><th scope="row"><div><svg class="chev"><use href="#chev"/></svg><svg class="mk"><use href="#dot"/></svg><svg class="ic"><use href="#t-codes"/></svg>Code System</div></th><td></td><td>167</td></tr>
          <tr class="l1"><th scope="row"><div><svg class="chev"><use href="#chev"/></svg><svg class="mk"><use href="#dot"/></svg><svg class="ic cblue"><use href="#code"/></svg>People</div></th><td></td><td>0</td></tr>
          <tr class="l2 sel"><th scope="row"><div><svg class="mk"><use href="#go"/></svg><svg class="ic red cblue"><use href="#code"/></svg>Parents</div></th><td></td><td>15</td></tr>
          <tr class="l2"><th scope="row"><div><svg class="mk"><use href="#dot"/></svg><svg class="ic cblue"><use href="#code"/></svg>Siblings</div></th><td></td><td>9</td></tr>
          <tr class="l2"><th scope="row"><div><svg class="mk"><use href="#dot"/></svg><svg class="ic cblue"><use href="#code"/></svg>Grandparents</div></th><td></td><td>6</td></tr>
          <tr class="l2"><th scope="row"><div><svg class="mk"><use href="#dot"/></svg><svg class="ic cblue"><use href="#code"/></svg>Friends</div></th><td></td><td>25</td></tr>
          <tr class="l2"><th scope="row"><div><svg class="mk"><use href="#dot"/></svg><svg class="ic cblue"><use href="#code"/></svg>Partner</div></th><td></td><td>12</td></tr>
          <tr class="l1"><th scope="row"><div><svg class="chev"><use href="#chev"/></svg><svg class="mk"><use href="#dot"/></svg><svg class="ic cblue"><use href="#code"/></svg>Assessments</div></th><td></td><td>0</td></tr>
          <tr class="l2"><th scope="row"><div><svg class="mk"><use href="#dot"/></svg><svg class="ic cgreen"><use href="#code"/></svg>positive</div></th><td></td><td>61</td></tr>
          <tr class="l2"><th scope="row"><div><svg class="mk"><use href="#dot"/></svg><svg class="ic cgray"><use href="#code"/></svg>ambivalent</div></th><td></td><td>7</td></tr>
          <tr class="l2"><th scope="row"><div><svg class="mk"><use href="#dot"/></svg><svg class="ic cred"><use href="#code"/></svg>negative</div></th><td></td><td>32</td></tr>
          <tr class="l0 strong leaf"><th scope="row"><div><svg class="mk"><use href="#dot"/></svg><svg class="ic"><use href="#set"/></svg>Sets</div></th><td></td><td>0</td></tr>
          </tbody>
        </table>
      </div>
    </section>
  </div>

  <div class="content">
    <section class="panel browser" aria-label="Document Browser">
      <header class="bar">
        <svg class="ic"><use href="#t-browser"/></svg><h2>Document Browser: Max <span class="count">(24 Paragraphs)</span></h2>
        <div class="tools">
          <div class="set"><button aria-label="Zoom out"><svg class="ic"><use href="#zoomout"/></svg></button><button aria-label="Zoom in"><svg class="ic"><use href="#zoomin"/></svg></button><button aria-label="Original size"><svg class="ic"><use href="#hundred"/></svg></button></div>
          <button aria-label="Sidebar"><svg class="ic"><use href="#sidebar"/></svg></button>
          <div class="set loose"><button aria-label="Print"><svg class="ic"><use href="#printer"/></svg></button><button aria-label="Export"><svg class="ic"><use href="#export"/></svg></button></div>
          <button aria-label="Search"><svg class="ic"><use href="#search"/></svg></button>
          <button aria-label="Spell check"><svg class="ic"><use href="#abc"/></svg></button>
          <button aria-label="Settings"><svg class="ic blue"><use href="#gear"/></svg></button>
          <div class="set"><button aria-label="Undock"><svg class="ic"><use href="#restore"/></svg></button><button aria-label="Minimize"><svg class="ic"><use href="#collapse"/></svg></button><button aria-label="Close"><svg class="ic"><use href="#close"/></svg></button></div>
        </div>
      </header>
      <div class="coding">
        <div class="combo"><select aria-label="Code"><option>People\Parents</option></select><svg class="arrow" viewBox="0 0 24 28"><path d="m8 12 4 4 4-4" fill="none" stroke="#fff" stroke-width="2.200"/></svg></div>
        <div class="tools">
          <div class="set"><button aria-label="Code"><svg class="ic cred"><use href="#seg"/></svg></button><button aria-label="Code with new code"><svg class="ic"><use href="#seg-plus"/></svg></button><button aria-label="Code in vivo"><svg class="ic"><use href="#seg-info"/></svg></button></div>
          <button aria-label="Open coding mode"><svg class="ic"><use href="#seg-box"/></svg></button>
          <div class="set"><button aria-label="Red marker"><svg class="ic m-red"><use href="#marker"/></svg></button><button aria-label="Blue marker"><svg class="ic m-blue"><use href="#marker"/></svg></button><button aria-label="Green marker"><svg class="ic m-green"><use href="#marker"/></svg></button><button aria-label="Yellow marker"><svg class="ic m-yellow"><use href="#marker"/></svg></button><button aria-label="Magenta marker"><svg class="ic m-magenta"><use href="#marker"/></svg></button></div>
          <button aria-label="Emoticode"><svg class="ic"><use href="#emoji"/></svg></button>
          <button aria-label="Undo coding"><svg class="ic"><use href="#seg-undo"/></svg></button>
          <div class="set"><button aria-label="Insert link"><svg class="ic blue"><use href="#link-plus"/></svg></button><button aria-label="Remove link"><svg class="ic"><use href="#link-x"/></svg></button></div>
        </div>
        <button class="edit" aria-label="Edit mode"><svg class="switch"><use href="#toggle"/></svg></button>
      </div>
      <div class="doc">
        <div class="gutter">
          <div class="codings">
            <ul><li class="cblue">..Siblings</li><li class="cgreen">..positive</li><li class="cblue">..Parents</li><li class="cred">..negative</li></ul>
            <svg width="60" height="90" viewBox="0 0 60 90" fill="none" stroke-width="2"><g class="cgreen" stroke="currentColor"><path d="M24 2h-3v22M21 31v21h3" stroke-width="2.400"/><circle cx="20" cy="27" r="4"/></g><g class="cblue" stroke="currentColor"><path d="M38 2h-3v22M35 31v21h3" stroke-width="2.400"/><circle cx="34" cy="27" r="4"/><path d="M52 2h-3v40M49 49v39h3" stroke-width="2.400"/><circle cx="48" cy="45" r="4"/></g><g class="cred" stroke="currentColor"><path d="M10 37H7v22M7 67v21h3" stroke-width="2.400"/><circle cx="6" cy="63" r="4"/></g></svg>
          </div>
          <div class="codings single">
            <ul><li class="cred">..negative</li></ul>
            <svg class="cred" width="22" height="124" viewBox="0 0 22 124" fill="none" stroke="currentColor" stroke-width="2"><path d="M14 2h-3v56M11 66v56h3" stroke-width="2.400"/><circle cx="10" cy="62" r="4"/></svg>
          </div>
        </div>
        <div class="spacer"></div>
        <ol class="paras">
          <li class="q"><span class="num">7</span><p><b>Q: How satisfied are you with your home life?</b></p></li>
          <li class="r"><span class="num">8</span><p><mark><b>R:</b> I feel okay about my home life. I get along pretty well with my parents and sister. We don't fight very often and they are very supportive in anything that I choose to do. However, I feel like they treat me like a child and, since I am 19, do not appreciate this very much. So, whenever I go home I hold some resentment toward my parents.</mark></p></li>
          <li class="q"><span class="num">9</span><p><b>Q: How satisfied are you with recreation and leisure in your life?</b></p></li>
          <li class="r"><span class="num">10</span><p><b>R:</b> Going to parties, exercising makes up most of what I do. I am VERY upset by my lack of time to relax. Basically, I don't have any. I have a lot of homework that never stops and I am very resentful for that. For instance, this week is little 5 week, and I cannot go to any of the parties because I have exams to study for and papers to write. I can feel that I am tense all of the time because I do not have time to relax. Hopefully, it will get better during the summer when I will only be</p></li>
        </ol>
      </div>
    </section>

    <section class="panel retrieved" aria-label="Retrieved Segments">
      <header class="bar">
        <svg class="ic"><use href="#t-segs"/></svg><h2>Retrieved Segments</h2>
        <div class="tools">
          <div class="set views"><button aria-label="With sources"><svg class="ic"><use href="#doc-in"/></svg></button><button aria-label="List"><svg class="ic"><use href="#doc-list"/></svg></button><button aria-label="Comments"><svg class="ic"><use href="#comment"/></svg></button></div>
          <button aria-label="Overview"><svg class="ic"><use href="#table-seg"/></svg></button>
          <div class="set"><button aria-label="Smart coding"><svg class="ic"><use href="#seg-bulb"/></svg></button><button aria-label="Matrix"><svg class="ic"><use href="#squares"/></svg></button><button aria-label="Word cloud"><svg class="ic"><use href="#wordcloud"/></svg></button></div>
          <button aria-label="Autocode"><svg class="ic"><use href="#seg-plus"/></svg></button>
          <div class="set"><button aria-label="Print"><svg class="ic"><use href="#printer"/></svg></button><button aria-label="Word export"><svg class="ic"><use href="#word"/></svg></button><button aria-label="Excel export"><svg class="ic"><use href="#excel"/></svg></button><button aria-label="Export"><svg class="ic"><use href="#export"/></svg></button></div>
          <button aria-label="Search"><svg class="ic"><use href="#search"/></svg></button>
          <button aria-label="Settings"><svg class="ic blue"><use href="#gear"/></svg></button>
          <div class="set"><button aria-label="Undock"><svg class="ic"><use href="#restore"/></svg></button><button aria-label="Minimize"><svg class="ic"><use href="#collapse"/></svg></button><button aria-label="Close"><svg class="ic"><use href="#close"/></svg></button></div>
        </div>
      </header>
      <div class="results">
        <div class="list-area">
          <h3>7 coded segments (from 5 documents, 1 document group)</h3>
          <article>
            <h4><svg class="ic red"><use href="#file-pen"/></svg>Interviews New York &gt; Max</h4>
            <p class="meta"><span>Age: 19</span><span>Relationship status: single</span><span>Education: High school</span></p>
            <div class="hit">
              <svg class="bracket cblue" width="12" height="76" viewBox="0 0 12 76" fill="none" stroke="currentColor" stroke-width="2"><path d="M11 2H7v30M7 41v32h4" stroke-width="2.400"/><circle cx="6" cy="37" r="4"/></svg>
              <div class="card">
                <p><b>R:</b> I feel okay about my home life. I get along pretty well with my parents and sister. We don't fight very often and they are very supportive in anything that I choose to do. However, I feel like they treat me like a child and, since I am 19, do not appreciate this very much. So, whenever I go home I hold some resentment toward my parents.</p>
                <p class="origin"><svg class="ic"><use href="#file-pen"/></svg><a href="#">Max, Pos. 8</a><svg class="ic cblue second"><use href="#code"/></svg><span>People &gt; Parents (0)</span></p>
              </div>
            </div>
          </article>
          <article>
            <h4><svg class="ic red"><use href="#file"/></svg>Interviews New York &gt; Joanna</h4>
            <p class="meta"><span>Age: 21</span><span>Relationship status: partnership</span><span>Education: High school</span></p>
            <div class="hit">
              <svg class="bracket cblue" width="12" height="76" viewBox="0 0 12 76" fill="none" stroke="currentColor" stroke-width="2"><path d="M11 2H7v30M7 41v32h4" stroke-width="2.400"/><circle cx="6" cy="37" r="4"/></svg>
              <div class="card"><p>My home life during school, I give a 7. My parents are great. They let me come and go as I please. But just living with</p></div>
            </div>
          </article>
        </div>
        <div class="rest"></div>
      </div>
    </section>
  </div>
</main>

<footer class="status">
  <span class="stat"><svg class="ic red"><use href="#file"/></svg>7</span>
  <span class="stat"><svg class="ic"><use href="#tag"/></svg>1</span>
  <span class="stat"><svg class="ic"><use href="#t-segs"/></svg>7</span>
  <span class="stat"><svg class="ic"><use href="#st-weight"/></svg>0</span>
  <span class="stat"><svg class="ic"><use href="#st-bottle"/></svg></span>
  <span class="stat"><svg class="ic"><use href="#st-user"/></svg></span>
  <span class="stat"><svg class="ic"><use href="#st-doc"/></svg></span>
  <span class="stat"><svg class="ic"><use href="#st-query"/></svg>Simple Coding Query (OR combination of codes)</span>
</footer>
</body>
</html>
```
FILE: styles.css
```css
:root {
  --navy: #005183;
  --pale: #d6e3f1;
  --frame: #cfcfcf;
  --ink: #262626;
  --ui: Inter, "Noto Sans", sans-serif;
  --text: "Liberation Sans", Arial, sans-serif;
  /* default icon colours, overridden by .red */
  --page: #fff;
  --edge: #585856;
  --rule: #4a87b7;
}

* { box-sizing: border-box; }

body {
  margin: 0;
  height: 100vh;
  display: flex;
  flex-direction: column;
  overflow: hidden;
  background: #2d5c8f;
  color: var(--ink);
  font-family: var(--text);
  font-size: 18px;
  line-height: 22px;
}

h2, h3, h4, p, ul, ol { margin: 0; padding: 0; list-style: none; }

button {
  border: 0;
  padding: 0;
  background: none;
  color: inherit;
  font: inherit;
}

svg { display: block; flex: none; }
svg text { font-family: var(--text); }
.sprite { position: absolute; width: 0; height: 0; }
.ic { width: 22px; height: 22px; overflow: visible; }

.blue { color: var(--navy); }
.cblue { color: #0b62a8; }
.cgreen { color: #59a608; }
.cgray { color: #a0a0a0; }
.cred { color: #e31f13; }
.m-red { color: #f03a2b; }
.m-blue { color: #4a87b7; }
.m-green { color: #5cb800; }
.m-yellow { color: #fdb813; }
.m-magenta { color: #b400a8; }
.red { --page: #fcdcdc; --edge: #e31f13; --rule: #e31f13; }
.fblue { --tab: #005183; --face: #62a5d8; }

/* top navigation */
.topbar {
  flex: none;
  height: 57px;
  display: flex;
  justify-content: space-between;
  padding: 0 26px 0 4px;
  background: var(--navy);
  border-top: 2px solid #a9a9a9;
  color: #fff;
}
.tabs { display: flex; }
.tab {
  padding: 17px 24px 0;
  color: #fff;
  font-weight: bold;
  text-decoration: none;
  white-space: nowrap;
}
.tab:nth-child(n+6) { padding: 17px 22px 0; }
.tab.active { border-bottom: 9px solid #76bc0b; }
.quick { display: flex; gap: 67px; align-items: center; padding-bottom: 2px; }

.set { display: flex; align-items: center; gap: 10px; }
.set.loose { gap: 12px; }
.set.wide { gap: 23px; }

/* ribbon */
.ribbon {
  flex: none;
  height: 133px;
  display: flex;
  padding: 5px 17px 10px;
  background: #fff;
  border-bottom: 1px solid #c8c8c8;
}
.group { display: flex; }
.group.first, .layouts, .group.split {
  border-right: 1px solid;
  border-image: linear-gradient(#fff, #d4d4d4 50%, #fff) 1;
}
.group.first { padding-right: 14px; }
.group.on { margin-left: 14px; background: var(--pale); }
.group.split { padding: 0 14px; }
.group.list { flex-direction: column; padding-left: 17px; width: 354px; }
.tool {
  position: relative;
  display: flex;
  flex-direction: column;
  align-items: center;
  gap: 12px;
  padding-top: 14px;
  text-align: center;
}
.w78 { width: 78px; }
.w86 { width: 86px; }
.w90 { width: 90px; }
.w92 { width: 92px; }
.w98 { width: 98px; }
.w100 { width: 100px; }
.w102 { width: 102px; }
.w114 { width: 114px; }
.w117 { width: 117px; }
.big { width: 44px; height: 44px; overflow: visible; }
.caret {
  position: absolute;
  border: 4px solid transparent;
  border-top: 5px solid #2d5c8f;
  border-bottom: 0;
}
.caret.side { right: 2px; bottom: 8px; }
.caret.under { bottom: 6px; }
.layouts {
  display: grid;
  grid-template-columns: 33px 33px;
  grid-auto-rows: 31px;
  gap: 9px 8px;
  padding: 13px 30px 0 11px;
}
.lay { width: 33px; height: 31px; }
.line {
  height: 40px;
  display: flex;
  align-items: center;
  gap: 8px;
  white-space: nowrap;
}
.sm { width: 23px; height: 23px; }

/* workspace */
.workspace {
  flex: 1;
  min-height: 0;
  display: grid;
  grid-template-columns: minmax(0, 663fr) minmax(0, 1312fr);
  grid-template-rows: minmax(0, 1fr);
  gap: 9px;
  padding: 7px 8px 0;
  background: var(--frame);
}
.side, .content { display: flex; flex-direction: column; min-height: 0; }
.side { gap: 8px; }
.content { gap: 9px; }
.panel {
  flex: 1 1 0;
  min-height: 0;
  display: flex;
  flex-direction: column;
  background: #fff;
  overflow: hidden;
}
.docs { flex-grow: 467; }
.codes { flex-grow: 463; border-top: 8px solid #86c440; }
.bar {
  flex: none;
  height: 57px;
  display: flex;
  align-items: center;
  padding: 0 16px 2px 11px;
  border-bottom: 1px solid #c4c4c4;
}
.codes .bar { height: 49px; padding-bottom: 9px; }
.bar > .ic { margin-right: 6px; }
.side .bar > .ic { margin-right: 7px; }
.bar h2 {
  flex: 1;
  padding-top: 4px;
  color: #000;
  font: 600 18px/22px var(--ui);
  white-space: nowrap;
}
.count { padding-left: 10px; }
.tools { display: flex; align-items: center; gap: 26px; }

/* trees */
.treebox {
  flex: 1;
  min-height: 0;
  overflow: hidden;
  margin-bottom: 2px;
  background:
    linear-gradient(#ebebeb, #ebebeb) right 118px top / 1px 100% no-repeat,
    linear-gradient(#ebebeb, #ebebeb) right 85px top / 1px 100% no-repeat;
}
.tree {
  width: 100%;
  table-layout: fixed;
  border-collapse: collapse;
  font-family: var(--ui);
  line-height: 28px;
}
.tree th, .tree td { padding: 0; font-weight: 400; }
.tree td { border-left: 1px solid #ebebeb; text-align: right; }
.tree td:nth-child(2) { width: 33px; }
.tree td:nth-child(3) { width: 86px; padding-right: 8px; }
.tree div {
  display: flex;
  align-items: center;
  height: 28px;
  white-space: nowrap;
}
.tree .l0 div { padding-left: 9px; }
.tree .l1 div { padding-left: 37px; }
.tree .l2 div { padding-left: 92px; }
.tree .leaf div { padding-left: 36px; }
.chev { width: 14px; height: 14px; margin-right: 13px; }
.mk { width: 10px; height: 10px; margin-right: 4px; }
.tree .ic { margin-right: 3px; }
.tree .strong th, .tree .strong td { font-weight: 700; }
.tree .act { color: #8c1a14; }
.tree .sel { color: #000; }
.tree .sel th { background: linear-gradient(var(--pale), var(--pale)) right / calc(100% - 85px) 100% no-repeat; }
.tree .sel td { background: var(--pale); }
.tree .sel td:nth-child(3) { background: linear-gradient(var(--pale), var(--pale)) left / calc(100% - 7px) 100% no-repeat; }

/* document browser */
.coding {
  flex: none;
  height: 45px;
  display: flex;
  align-items: center;
  gap: 13px;
  padding: 0 16px 2px 12px;
  border-bottom: 2px solid #d6d6d6;
}
.coding .tools { flex: 1; gap: 23px; }
.coding .set { gap: 11px; }
.combo { display: flex; width: 403px; height: 28px; }
.combo select {
  flex: 1;
  appearance: none;
  border: 1px solid #c9c9c9;
  border-right: 0;
  border-radius: 0;
  padding: 0 5px;
  background: #fff;
  color: var(--ink);
  font: 17px/22px var(--ui);
}
.arrow {
  width: 24px;
  height: 28px;
  border-radius: 0 4px 4px 0;
  background: linear-gradient(#4a9aff, #0a6cff);
}
.switch { width: 50px; height: 26px; }
.doc {
  flex: 1;
  min-height: 0;
  display: flex;
  overflow: hidden;
}
.gutter { width: 159px; flex: none; background: #f5f5f5; }
.spacer { width: 24px; flex: none; border-left: 1px solid #fff; background: #f5f5f5; }
.codings {
  display: flex;
  justify-content: flex-end;
  gap: 8px;
  margin-top: 67px;
  font: 17px/22px var(--ui);
  text-align: right;
}
.codings ul { padding-top: 15px; }
.codings.single { align-items: center; gap: 4px; margin-top: 62px; }
.single ul { padding: 0; }
.paras {
  flex: 1;
  min-width: 0;
  padding-top: 28px;
  font-size: 20px;
  line-height: 35px;
  color: #000;
  background: linear-gradient(#c4c4c4, #c4c4c4) 34px 0 / 2px 100% no-repeat, linear-gradient(90deg, #fff 1px, #f5f5f5 1px, #f5f5f5 33px, #fff 33px);
}
.paras li { display: flex; }
.paras .num {
  flex: none;
  width: 33px;
  margin: 3px 14px 13px 0;
  padding-left: 1px;
  background: #fff;
  color: #1f5a92;
  font: 14px/19px var(--ui);
  text-align: center;
}
.paras .r .num { margin-bottom: 0; line-height: 22px; }
.paras .r { margin-bottom: 24px; }
.paras p { flex: 1; }
mark { background: #acd6ff; color: #1c2733; }

/* retrieved segments */
.retrieved .views {
  height: 55px;
  margin: 0 14px -2px 0;
  padding: 0 5px;
  background: #e6e6e6;
}
.results {
  flex: 1;
  min-height: 0;
  display: grid;
  grid-template-columns: minmax(0, 1fr) 215px;
  overflow: hidden;
  margin: 0 1px 1px;
  background: #f5f5f5;
}
.rest { border-left: 2px solid #c4c4c4; }
.list-area {
  min-height: 0;
  overflow: hidden;
  padding-top: 7px;
  background: linear-gradient(#fff, #fff) 30px 0 / 1px 100% no-repeat;
}
.results h3 {
  padding-left: 60px;
  margin-bottom: 6px;
  color: #000;
  font-size: 18px;
  line-height: 22px;
}
.results h4 {
  display: flex;
  align-items: center;
  gap: 8px;
  padding: 20px 0 0 60px;
  color: #0b4d83;
  font-size: 18px;
  line-height: 24px;
}
.meta {
  display: flex;
  gap: 14px;
  padding: 19px 0 18px 67px;
  color: #7d7d7d;
  font-size: 17px;
  line-height: 22px;
}
.hit { display: flex; }
.bracket { margin: 11px 28px 0 14px; }
.card {
  flex: 1;
  padding: 12px 20px 13px 14px;
  background: #fff;
  color: #000;
  font-size: 19px;
  line-height: 24px;
}
.origin {
  display: flex;
  align-items: center;
  gap: 4px;
  padding: 20px 0 0 14px;
  color: #777;
  font: 17px/22px var(--ui);
}
.origin a {
  color: inherit;
  text-decoration: none;
  border-bottom: 2px solid #b4b4b4;
  line-height: 20px;
}
.origin .second { margin-left: 40px; }

/* status bar */
.status {
  flex: none;
  height: 46px;
  display: grid;
  grid-template-columns: repeat(7, 110px) 1fr;
  align-items: center;
  padding-left: 14px;
  background: var(--frame);
  border-radius: 0 0 8px 8px;
  font: 19px/22px var(--ui);
}
.stat { display: flex; align-items: center; gap: 1px; }
```
